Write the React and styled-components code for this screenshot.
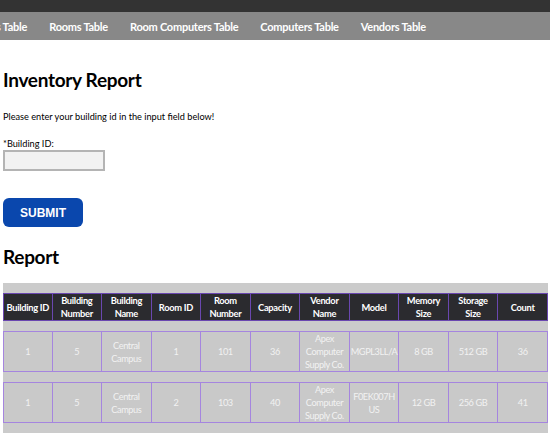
import React from "react";
import styled, { createGlobalStyle } from "styled-components";

const Global = createGlobalStyle`
  html, body { margin: 0; padding: 0; background: #fff; overflow: hidden; }
  body { font-family: Lato, "Open Sans", sans-serif; color: #000; }
`;

const TopBar = styled.div`
  height: 12px;
  background: #333333;
`;

const Nav = styled.nav`
  height: 28px;
  background: #888888;
  display: flex;
  align-items: center;
  overflow: hidden;
`;

const NavList = styled.ul`
  list-style: none;
  margin: 0 0 0 -42px;
  padding: 0;
  display: flex;
  gap: 22px;
  white-space: nowrap;
`;

const NavItem = styled.li`
  color: #fff;
  font-weight: 700;
  font-size: 11px;
  letter-spacing: -0.25px;
`;

const Main = styled.main`
  padding: 0 3px;
`;

const Title = styled.h1`
  margin: ${(p) => p.$top}px 0 0;
  font-size: 19px;
  font-weight: 700;
  line-height: 24px;
  letter-spacing: -0.3px;
`;

const Para = styled.p`
  margin: 19px 0 0;
  font-size: 9.2px;
  line-height: 12px;
`;

const Label = styled.label`
  display: block;
  margin-top: 15px;
  font-size: 9.2px;
  line-height: 12px;
`;

const Input = styled.input`
  display: block;
  box-sizing: border-box;
  width: 102px;
  height: 21px;
  margin-top: 0;
  background: #f2f2f2;
  border: 2px solid #b4b4b4;
  outline: none;
`;

const Submit = styled.button`
  display: block;
  margin-top: 27px;
  width: 80px;
  height: 29px;
  border: none;
  border-radius: 6px;
  background: #0a47ad;
  color: #fff;
  font-family: "Liberation Sans", Arial, sans-serif;
  font-weight: 700;
  font-size: 12px;
`;

const Table = styled.table`
  margin-top: 14px;
  width: 545px;
  background: #cbcbcb;
  border-collapse: separate;
  border-spacing: 0 10px;
  table-layout: fixed;
`;

const Th = styled.th`
  background: #2b2b2f;
  color: #fff;
  font-size: 9.3px;
  font-weight: 700;
  line-height: 13px;
  height: 26px;
  padding: 0 1px;
  border: 1px solid #6a47b0;
  border-left-width: ${(p) => (p.$first ? 1 : 0)}px;
  letter-spacing: -0.3px;
`;

const Td = styled.td`
  background: #c9c9c9;
  color: #f2f2f2;
  font-size: 9.2px;
  line-height: 13px;
  height: 39px;
  padding: 0 1px;
  text-align: center;
  border: 1px solid #a585df;
  border-left-width: ${(p) => (p.$first ? 1 : 0)}px;
  overflow-wrap: anywhere;
  letter-spacing: -0.4px;
`;

const navItems = ["Buildings Table", "Rooms Table", "Room Computers Table", "Computers Table", "Vendors Table"];

const headers = [
  ["Building ID"], ["Building", "Number"], ["Building", "Name"], ["Room ID"], ["Room", "Number"],
  ["Capacity"], ["Vendor", "Name"], ["Model"], ["Memory", "Size"], ["Storage", "Size"], ["Count"],
];

const rows = [
  ["1", "5", "Central Campus", "1", "101", "36", "Apex Computer Supply Co.", "MGPL3LL/A", "8 GB", "512 GB", "36"],
  ["1", "5", "Central Campus", "2", "103", "40", "Apex Computer Supply Co.", "F0EK007HUS", "12 GB", "256 GB", "41"],
];

export default function App() {
  return (
    <>
      <Global />
      <TopBar />
      <Nav>
        <NavList>
          {navItems.map((n) => (
            <NavItem key={n}>{n}</NavItem>
          ))}
        </NavList>
      </Nav>
      <Main>
        <Title $top={28}>Inventory Report</Title>
        <Para>Please enter your building id in the input field below!</Para>
        <Label htmlFor="bid">*Building ID:</Label>
        <Input id="bid" />
        <Submit>SUBMIT</Submit>
        <Title $top={18}>Report</Title>
        <Table>
          <thead>
            <tr>
              {headers.map((h, i) => (
                <Th key={i} $first={i === 0}>
                  {h.map((l, j) => (
                    <React.Fragment key={j}>
                      {j > 0 && <br />}
                      {l}
                    </React.Fragment>
                  ))}
                </Th>
              ))}
            </tr>
          </thead>
          <tbody>
            {rows.map((r, i) => (
              <tr key={i}>
                {r.map((c, j) => (
                  <Td key={j} $first={j === 0}>{c}</Td>
                ))}
              </tr>
            ))}
          </tbody>
        </Table>
      </Main>
    </>
  );
}
